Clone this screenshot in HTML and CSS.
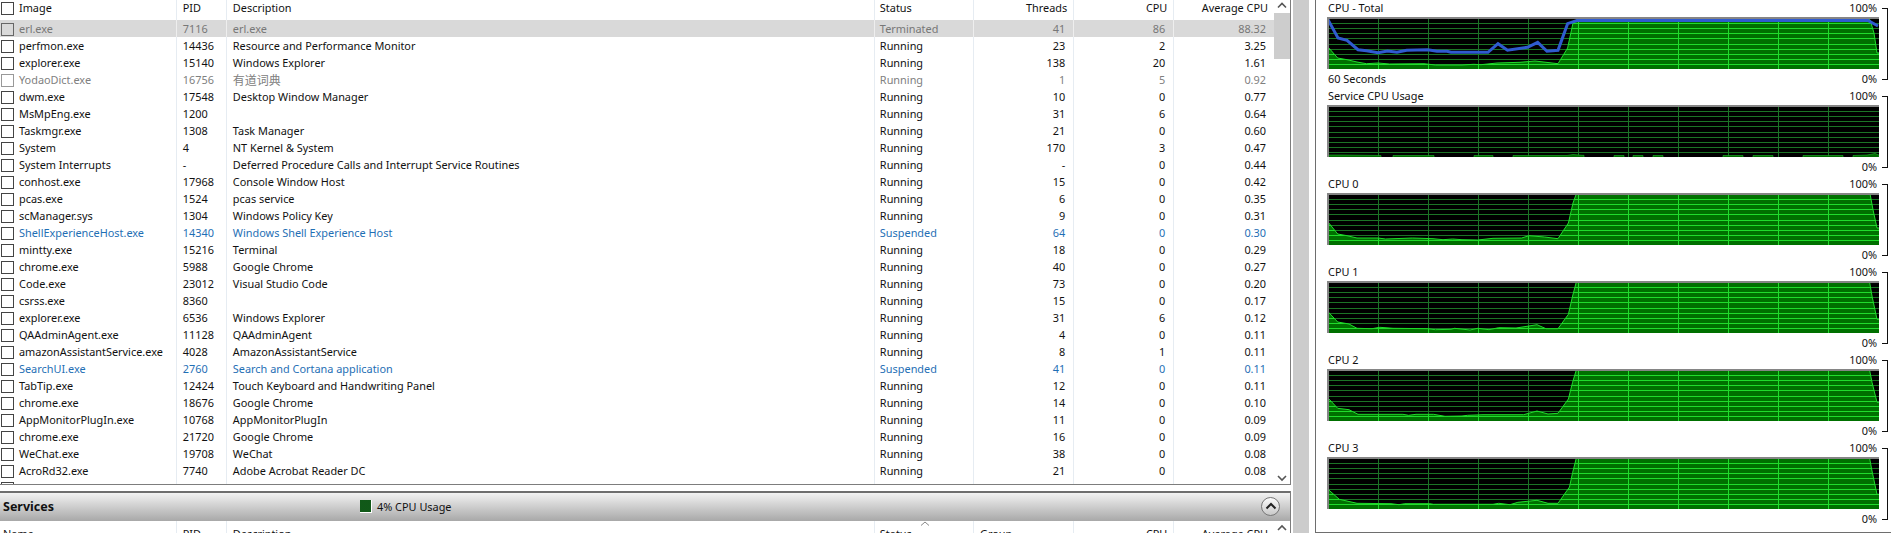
FILE: index.html
```html
<!DOCTYPE html>
<html>
<head>
  <title>Resource Monitor - CPU</title>
  <link rel="stylesheet" href="styles.css">
</head>
<body>
  <svg class="defs" width="0" height="0">
    <defs>
      <path id="grid" d="M51.5 0V52M101.5 0V52M151.5 0V52M201.5 0V52M251.5 0V52M301.5 0V52M351.5 0V52M401.5 0V52M451.5 0V52M501.5 0V52M0 6.5H552M0 11.5H552M0 16.5H552M0 21.5H552M0 27.5H552M0 32.5H552M0 37.5H552M0 42.5H552M0 47.5H552"/>
    </defs>
  </svg>

  <div class="app">
    <div class="left">
      <!-- processes -->
      <section class="panel procs">
        <div class="list">
          <table>
            <colgroup>
              <col class="c-image"><col class="c-pid"><col class="c-desc"><col class="c-status"><col class="c-num"><col class="c-num"><col class="c-num">
            </colgroup>
            <thead>
              <tr><th><span class="box"></span>Image</th><th>PID</th><th>Description</th><th class="st">Status</th><th class="num">Threads</th><th class="num">CPU</th><th class="num">Average CPU</th></tr>
            </thead>
            <tbody>
              <tr class="ended"><td><span class="box"></span>erl.exe</td><td>7116</td><td>erl.exe</td><td class="st">Terminated</td><td class="num">41</td><td class="num">86</td><td class="num">88.32</td></tr>
              <tr><td><span class="box"></span>perfmon.exe</td><td>14436</td><td>Resource and Performance Monitor</td><td class="st">Running</td><td class="num">23</td><td class="num">2</td><td class="num">3.25</td></tr>
              <tr><td><span class="box"></span>explorer.exe</td><td>15140</td><td>Windows Explorer</td><td class="st">Running</td><td class="num">138</td><td class="num">20</td><td class="num">1.61</td></tr>
              <tr class="dim"><td><span class="box"></span>YodaoDict.exe</td><td>16756</td><td class="cjk">有道词典</td><td class="st">Running</td><td class="num">1</td><td class="num">5</td><td class="num">0.92</td></tr>
              <tr><td><span class="box"></span>dwm.exe</td><td>17548</td><td>Desktop Window Manager</td><td class="st">Running</td><td class="num">10</td><td class="num">0</td><td class="num">0.77</td></tr>
              <tr><td><span class="box"></span>MsMpEng.exe</td><td>1200</td><td></td><td class="st">Running</td><td class="num">31</td><td class="num">6</td><td class="num">0.64</td></tr>
              <tr><td><span class="box"></span>Taskmgr.exe</td><td>1308</td><td>Task Manager</td><td class="st">Running</td><td class="num">21</td><td class="num">0</td><td class="num">0.60</td></tr>
              <tr><td><span class="box"></span>System</td><td>4</td><td>NT Kernel &amp; System</td><td class="st">Running</td><td class="num">170</td><td class="num">3</td><td class="num">0.47</td></tr>
              <tr><td><span class="box"></span>System Interrupts</td><td>-</td><td>Deferred Procedure Calls and Interrupt Service Routines</td><td class="st">Running</td><td class="num">-</td><td class="num">0</td><td class="num">0.44</td></tr>
              <tr><td><span class="box"></span>conhost.exe</td><td>17968</td><td>Console Window Host</td><td class="st">Running</td><td class="num">15</td><td class="num">0</td><td class="num">0.42</td></tr>
              <tr><td><span class="box"></span>pcas.exe</td><td>1524</td><td>pcas service</td><td class="st">Running</td><td class="num">6</td><td class="num">0</td><td class="num">0.35</td></tr>
              <tr><td><span class="box"></span>scManager.sys</td><td>1304</td><td>Windows Policy Key</td><td class="st">Running</td><td class="num">9</td><td class="num">0</td><td class="num">0.31</td></tr>
              <tr class="susp"><td><span class="box"></span>ShellExperienceHost.exe</td><td>14340</td><td>Windows Shell Experience Host</td><td class="st">Suspended</td><td class="num">64</td><td class="num">0</td><td class="num">0.30</td></tr>
              <tr><td><span class="box"></span>mintty.exe</td><td>15216</td><td>Terminal</td><td class="st">Running</td><td class="num">18</td><td class="num">0</td><td class="num">0.29</td></tr>
              <tr><td><span class="box"></span>chrome.exe</td><td>5988</td><td>Google Chrome</td><td class="st">Running</td><td class="num">40</td><td class="num">0</td><td class="num">0.27</td></tr>
              <tr><td><span class="box"></span>Code.exe</td><td>23012</td><td>Visual Studio Code</td><td class="st">Running</td><td class="num">73</td><td class="num">0</td><td class="num">0.20</td></tr>
              <tr><td><span class="box"></span>csrss.exe</td><td>8360</td><td></td><td class="st">Running</td><td class="num">15</td><td class="num">0</td><td class="num">0.17</td></tr>
              <tr><td><span class="box"></span>explorer.exe</td><td>6536</td><td>Windows Explorer</td><td class="st">Running</td><td class="num">31</td><td class="num">6</td><td class="num">0.12</td></tr>
              <tr><td><span class="box"></span>QAAdminAgent.exe</td><td>11128</td><td>QAAdminAgent</td><td class="st">Running</td><td class="num">4</td><td class="num">0</td><td class="num">0.11</td></tr>
              <tr><td><span class="box"></span>amazonAssistantService.exe</td><td>4028</td><td>AmazonAssistantService</td><td class="st">Running</td><td class="num">8</td><td class="num">1</td><td class="num">0.11</td></tr>
              <tr class="susp"><td><span class="box"></span>SearchUI.exe</td><td>2760</td><td>Search and Cortana application</td><td class="st">Suspended</td><td class="num">41</td><td class="num">0</td><td class="num">0.11</td></tr>
              <tr><td><span class="box"></span>TabTip.exe</td><td>12424</td><td>Touch Keyboard and Handwriting Panel</td><td class="st">Running</td><td class="num">12</td><td class="num">0</td><td class="num">0.11</td></tr>
              <tr><td><span class="box"></span>chrome.exe</td><td>18676</td><td>Google Chrome</td><td class="st">Running</td><td class="num">14</td><td class="num">0</td><td class="num">0.10</td></tr>
              <tr><td><span class="box"></span>AppMonitorPlugIn.exe</td><td>10768</td><td>AppMonitorPlugIn</td><td class="st">Running</td><td class="num">11</td><td class="num">0</td><td class="num">0.09</td></tr>
              <tr><td><span class="box"></span>chrome.exe</td><td>21720</td><td>Google Chrome</td><td class="st">Running</td><td class="num">16</td><td class="num">0</td><td class="num">0.09</td></tr>
              <tr><td><span class="box"></span>WeChat.exe</td><td>19708</td><td>WeChat</td><td class="st">Running</td><td class="num">38</td><td class="num">0</td><td class="num">0.08</td></tr>
              <tr><td><span class="box"></span>AcroRd32.exe</td><td>7740</td><td>Adobe Acrobat Reader DC</td><td class="st">Running</td><td class="num">21</td><td class="num">0</td><td class="num">0.08</td></tr>
              <tr><td><span class="box"></span></td><td></td><td></td><td></td><td></td><td></td><td></td></tr>
            </tbody>
          </table>
        </div>
        <div class="scroll">
          <svg class="arrow" width="16" height="13" viewBox="0 0 16 13"><path d="M4 7.5L8 3.5L12 7.5"/></svg>
          <div class="thumb"></div>
          <div class="track"></div>
          <svg class="arrow" width="16" height="13" viewBox="0 0 16 13"><path d="M4 5L8 9L12 5"/></svg>
        </div>
      </section>

      <!-- services -->
      <section class="panel services">
        <div class="bar">
          <strong class="bar-title">Services</strong>
          <span class="usage"><i class="usage-icon"></i>4% CPU Usage</span>
          <button class="collapse"><svg width="12" height="8" viewBox="0 0 12 8"><path d="M1.5 6.5L6 2L10.5 6.5"/></svg></button>
        </div>
        <div class="body">
          <div class="list">
            <table>
              <colgroup>
                <col class="c-image"><col class="c-pid"><col class="c-desc"><col class="c-status"><col class="c-num"><col class="c-num"><col class="c-num">
              </colgroup>
              <thead>
                <tr><th class="pad">Name</th><th>PID</th><th>Description</th><th class="st sorted">Status<svg class="caret" width="10" height="5" viewBox="0 0 10 5"><path d="M1 4.5L5 1L9 4.5"/></svg></th><th>Group</th><th class="num">CPU</th><th class="num">Average CPU</th></tr>
              </thead>
            </table>
          </div>
          <div class="scroll">
            <svg class="arrow" width="16" height="13" viewBox="0 0 16 13"><path d="M4 9L8 5L12 9"/></svg>
          </div>
        </div>
      </section>
    </div>

    <div class="gap"><div class="splitter"></div></div>

    <!-- charts -->
    <aside class="charts">
      <div class="chart">
        <div class="chart-main">
          <div class="chart-row"><span>CPU - Total</span><span>100%</span></div>
          <svg class="graph" width="552" height="52" viewBox="0 0 552 52">
            <clipPath id="total"><polygon id="total-area" points="1,30 10.7,41 20,42.7 30,45 39.5,46.7 51,46 62.5,47 97,46.7 108.4,48 135,48 146.7,47.3 154,47.7 170,46 193,45.3 208,44 231,46.7 240.6,31 246,6 250,2.7 543,2.7 547,16 550,36 553,36 553,54 1,54"/></clipPath>
            <use href="#grid" class="grid-dim"/>
            <use href="#total-area" class="area"/>
            <use href="#grid" class="grid-lit" clip-path="url(#total)"/>
            <polyline class="kernel" points="1,2.7 11,21 20,23.3 31,32.7 39.5,33.7 51,35.7 60.5,34 70,35.3 79.7,33.3 100.8,32.7 110,34.3 120,34.3 124,35.3 161,35.3 171,26.7 180.5,33.3 200.5,30.3 210.7,25.3 220,34.3 231,33.3 240.6,6.7 250,3.5 541,3.5 551,9"/>
            <path class="frame" d="M0 1H552M1 0V52"/>
          </svg>
          <div class="chart-foot"><span>60 Seconds</span><span>0%</span></div>
        </div>
        <div class="bracket"></div>
      </div>

      <div class="chart">
        <div class="chart-main">
          <div class="chart-row"><span>Service CPU Usage</span><span>100%</span></div>
          <svg class="graph" width="552" height="52" viewBox="0 0 552 52">
            <use href="#grid" class="grid-dim"/>
            <path class="trickle" d="M1 53V50H16L54 50.5V53ZM66 53V50.5H107V53ZM147 53V50.5H166V53ZM186 53V50.5H240L246 49.5L255 50.3H257V53ZM287 53V50.5H297V53ZM306 53V50.5H316V53ZM326 53V50.5H336V53ZM396 53V50.5H416V53ZM426 53V50.5H446V53ZM476 53V50.5H516V53ZM526 53V50.5L540 50L548 48.5L552 50V53Z"/>
            <path class="frame" d="M0 1H552M1 0V52"/>
          </svg>
          <div class="chart-foot"><span></span><span>0%</span></div>
        </div>
        <div class="bracket"></div>
      </div>

      <div class="chart">
        <div class="chart-main">
          <div class="chart-row"><span>CPU 0</span><span>100%</span></div>
          <svg class="graph" width="552" height="52" viewBox="0 0 552 52">
            <clipPath id="cpu0"><polygon id="cpu0-area" points="1,29 10.7,41 20,42.7 30,45 51,45 58.6,46 85.5,45 106,45.7 116,46.7 125.7,46 135,46.7 150.6,47 166,45.3 194.6,45 202,42.7 217.6,44 231,45.7 241.4,30 246,10 249.4,.7 543,.7 546,16.7 550,35 553,35 553,54 1,54"/></clipPath>
            <use href="#grid" class="grid-dim"/>
            <use href="#cpu0-area" class="area"/>
            <use href="#grid" class="grid-lit" clip-path="url(#cpu0)"/>
            <path class="frame" d="M0 1H552M1 0V52"/>
          </svg>
          <div class="chart-foot"><span></span><span>0%</span></div>
        </div>
        <div class="bracket"></div>
      </div>

      <div class="chart">
        <div class="chart-main">
          <div class="chart-row"><span>CPU 1</span><span>100%</span></div>
          <svg class="graph" width="552" height="52" viewBox="0 0 552 52">
            <clipPath id="cpu1"><polygon id="cpu1-area" points="1,30.7 10.7,41 22,43 30,47.3 45,47.7 52.8,46.3 66,47.3 100.8,47.7 108.4,48.7 124,48.3 127.6,47.3 143,49 150.6,47.3 162,48.7 171.7,46.7 189,47 200,45.3 210,43.7 219,47.7 231,47.7 241.4,33.3 245.6,15 249.4,.7 542.5,.7 545,15 550,38.3 553,38.3 553,54 1,54"/></clipPath>
            <use href="#grid" class="grid-dim"/>
            <use href="#cpu1-area" class="area"/>
            <use href="#grid" class="grid-lit" clip-path="url(#cpu1)"/>
            <path class="frame" d="M0 1H552M1 0V52"/>
          </svg>
          <div class="chart-foot"><span></span><span>0%</span></div>
        </div>
        <div class="bracket"></div>
      </div>

      <div class="chart">
        <div class="chart-main">
          <div class="chart-row"><span>CPU 2</span><span>100%</span></div>
          <svg class="graph" width="552" height="52" viewBox="0 0 552 52">
            <clipPath id="cpu2"><polygon id="cpu2-area" points="1,29 10.7,39.3 22,40.7 31,45.3 75.9,45.3 81.6,46.3 89,45.3 106.5,45.3 118,47.3 135,47 140.6,46.3 156,45.7 196.6,45.7 210,42 221,45 231,44.3 241.4,30 245.6,13.3 249.4,.7 542.5,.7 545,13.3 550,33.3 553,33.3 553,54 1,54"/></clipPath>
            <use href="#grid" class="grid-dim"/>
            <use href="#cpu2-area" class="area"/>
            <use href="#grid" class="grid-lit" clip-path="url(#cpu2)"/>
            <path class="frame" d="M0 1H552M1 0V52"/>
          </svg>
          <div class="chart-foot"><span></span><span>0%</span></div>
        </div>
        <div class="bracket"></div>
      </div>

      <div class="chart">
        <div class="chart-main">
          <div class="chart-row"><span>CPU 3</span><span>100%</span></div>
          <svg class="graph" width="552" height="52" viewBox="0 0 552 52">
            <clipPath id="cpu3"><polygon id="cpu3-area" points="1,32.3 12.3,42.3 30,46.3 64,46.7 72,47.7 77.8,46.7 102.7,46.7 106.5,47.3 166,47.3 171.7,46.3 183,47.7 190.9,45.3 210,43.3 221,46.3 231,46.3 242.5,30 245.6,15.7 249.4,.7 542.5,.7 545,14 550,37.3 553,37.3 553,54 1,54"/></clipPath>
            <use href="#grid" class="grid-dim"/>
            <use href="#cpu3-area" class="area"/>
            <use href="#grid" class="grid-lit" clip-path="url(#cpu3)"/>
            <path class="frame" d="M0 1H552M1 0V52"/>
          </svg>
          <div class="chart-foot"><span></span><span>0%</span></div>
        </div>
        <div class="bracket"></div>
      </div>
    </aside>
  </div>
</body>
</html>
```

FILE: styles.css
```css
html, body {
  margin: 0;
  height: 533px;
  overflow: hidden;
  background: #fff;
}
body {
  font-family: "Noto Sans", "Noto Sans CJK SC", sans-serif;
  font-size: 10.9px;
  color: #111;
}
.defs {
  display: block;
}
.app {
  display: flex;
  height: 533px;
}
.left {
  width: 1291px;
  flex: none;
}
.panel {
  border-right: 1px solid #7d7d7d;
}
.procs {
  display: flex;
  height: 484px;
  border-bottom: 1px solid #7d7d7d;
}
.list {
  width: 1274px;
  flex: none;
  overflow: hidden;
}
table {
  width: 1274px;
  table-layout: fixed;
  border-collapse: collapse;
}
.c-image { width: 176px; }
.c-pid { width: 50px; }
.c-desc { width: 647px; }
.c-status { width: 99px; }
.c-num { width: 100px; }
th, td {
  padding: 0 6px;
  text-align: left;
  font-weight: normal;
  white-space: nowrap;
  overflow: hidden;
  border-left: 1px solid #e6ecf2;
}
th:first-child, td:first-child {
  padding: 0 0 0 1px;
  border-left: none;
}
th.st, td.st {
  padding-left: 5px;
}
th {
  height: 20px;
  line-height: 16px;
  vertical-align: top;
}
td {
  height: 17px;
  line-height: 17px;
}
td.cjk {
  font-family: "Noto Sans CJK SC", sans-serif;
  font-size: 12px;
}
.num {
  text-align: right;
}
td.num {
  padding-right: 8px;
}
th.num {
  padding-right: 6px;
}
.box {
  display: inline-block;
  width: 11px;
  height: 11px;
  margin-right: 5px;
  border: 1px solid #444;
  vertical-align: -3px;
}
.ended td {
  background: #d9d9d9;
  color: #777;
  border-left-color: #eeeeee;
}
.ended .box {
  border-color: #666;
}
.dim td {
  color: #808080;
}
.dim .box {
  border-color: #999;
}
.susp td {
  color: #1f6fb5;
}

/* scrollbar */
.scroll {
  display: flex;
  flex-direction: column;
  width: 16px;
  flex: none;
}
.arrow {
  flex: none;
}
.arrow path {
  fill: none;
  stroke: #555;
  stroke-width: 1.6;
}
.thumb {
  height: 46px;
  flex: none;
  background: #cdcdcd;
}
.track {
  flex: 1;
}

/* services */
.services {
  margin-top: 6px;
  height: 43px;
  overflow: hidden;
}
.bar {
  display: flex;
  align-items: center;
  height: 26px;
  padding: 0 10px 2px 3px;
  border-top: 2px solid #6e6e6e;
  background: linear-gradient(#f2f2f2, #a8a8a8);
}
.bar-title {
  width: 357px;
  font-size: 12.5px;
  font-weight: bold;
}
.usage {
  display: flex;
  align-items: center;
  flex: 1;
}
.usage-icon {
  width: 11px;
  height: 12px;
  margin-right: 5px;
  border-right: 1px solid #fff;
  border-bottom: 1px solid #fff;
  background-color: #17741f;
  background-image: radial-gradient(#0a3a10 0.6px, transparent 0.8px);
  background-size: 2px 2px;
}
.collapse {
  display: flex;
  align-items: center;
  justify-content: center;
  width: 19px;
  height: 19px;
  padding: 0;
  border: 1px solid #777;
  border-radius: 50%;
  background: linear-gradient(#fbfbfb, #c9c9c9);
}
.collapse path {
  fill: none;
  stroke: #222;
  stroke-width: 2;
}
.body {
  display: flex;
}
.services th {
  padding-top: 5px;
}
.services th:first-child {
  padding-left: 3px;
}
.sorted {
  position: relative;
}
.caret {
  position: absolute;
  top: 0;
  left: 45px;
}
.caret path {
  fill: none;
  stroke: #888;
}

/* charts */
.gap {
  width: 24px;
  flex: none;
  padding-left: 2px;
  box-sizing: border-box;
}
.splitter {
  width: 16px;
  height: 533px;
  background: #cccccc;
}
.charts {
  flex: 1;
  box-sizing: border-box;
  height: 533px;
  padding-left: 11px;
  border-left: 1px solid #6e6e6e;
  border-bottom: 1px solid #6e6e6e;
}
.chart {
  display: flex;
  height: 88px;
}
.chart-main {
  width: 552px;
  flex: none;
}
.chart-row, .chart-foot {
  display: flex;
  justify-content: space-between;
  padding: 0 2px 0 1px;
  white-space: nowrap;
}
.chart-row {
  height: 17px;
  line-height: 16px;
}
.chart-foot {
  height: 19px;
  line-height: 20px;
}
.graph {
  display: block;
  background: #000;
}
.grid-dim {
  fill: none;
  stroke: #1c7426;
  stroke-width: 1;
}
.grid-lit {
  fill: none;
  stroke: #20dc2c;
  stroke-width: 1;
}
.area {
  fill: #007000;
  stroke: #20dc2c;
  stroke-width: 1;
}
.trickle {
  fill: #006a00;
  stroke: #1fb82a;
  stroke-width: 0.6;
}
.kernel {
  fill: none;
  stroke: #2f5bd0;
  stroke-width: 3;
}
.frame {
  fill: none;
  stroke: #858585;
  stroke-width: 2;
}
.bracket {
  box-sizing: border-box;
  width: 6px;
  height: 72px;
  margin: 8px 0 0 3px;
  border: 1px solid #111;
  border-left: none;
}
```
